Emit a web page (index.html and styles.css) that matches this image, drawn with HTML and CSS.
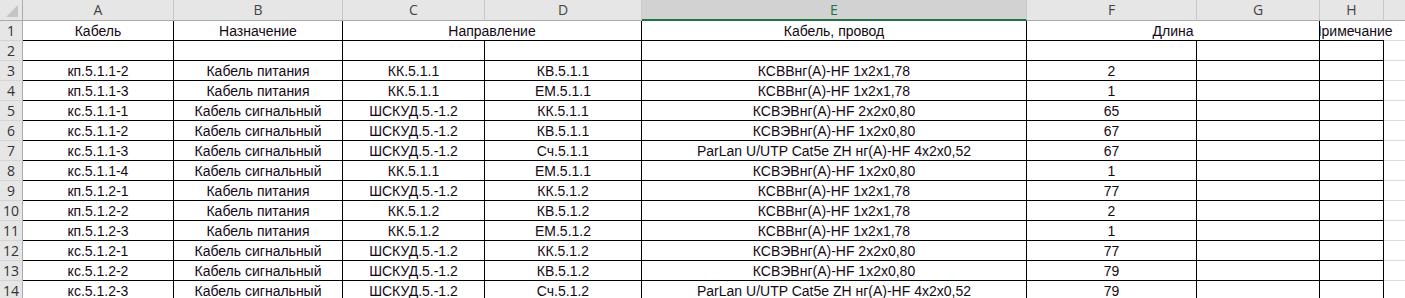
FILE: index.html
```html
<!DOCTYPE html>
<html lang="ru">
<head>
<meta charset="utf-8">
<title>Кабельный журнал</title>
<link rel="stylesheet" href="styles.css">
</head>
<body>
<div class="sheet">
  <div class="grid">
    <div class="corner"><svg width="22" height="20" viewBox="0 0 22 20"><polygon points="18,5 18,17 6,17" fill="#c4c4c4"/></svg></div>
    <div class="ch">A</div>
    <div class="ch">B</div>
    <div class="ch">C</div>
    <div class="ch">D</div>
    <div class="ch sel">E</div>
    <div class="ch">F</div>
    <div class="ch">G</div>
    <div class="ch">H</div>
    <div class="ch"></div>

    <div class="rh">1</div>
    <div class="c">Кабель</div>
    <div class="c">Назначение</div>
    <div class="c span2">Направление</div>
    <div class="c">Кабель, провод</div>
    <div class="c span2">Длина</div>
    <div class="c note">Примечание</div>
    <div class="ci"></div>

    <div class="rh">2</div>
    <div class="c"></div><div class="c"></div><div class="c"></div><div class="c"></div><div class="c"></div><div class="c"></div><div class="c"></div><div class="c"></div>
    <div class="ci"></div>

    <div class="rh">3</div>
    <div class="c">кп.5.1.1-2</div><div class="c">Кабель питания</div><div class="c">КК.5.1.1</div><div class="c">КВ.5.1.1</div><div class="c">КСВВнг(А)-HF 1х2х1,78</div><div class="c">2</div><div class="c"></div><div class="c"></div>
    <div class="ci"></div>

    <div class="rh">4</div>
    <div class="c">кп.5.1.1-3</div><div class="c">Кабель питания</div><div class="c">КК.5.1.1</div><div class="c">ЕМ.5.1.1</div><div class="c">КСВВнг(А)-HF 1х2х1,78</div><div class="c">1</div><div class="c"></div><div class="c"></div>
    <div class="ci"></div>

    <div class="rh">5</div>
    <div class="c">кс.5.1.1-1</div><div class="c">Кабель сигнальный</div><div class="c">ШСКУД.5.-1.2</div><div class="c">КК.5.1.1</div><div class="c">КСВЭВнг(А)-HF 2х2х0,80</div><div class="c">65</div><div class="c"></div><div class="c"></div>
    <div class="ci"></div>

    <div class="rh">6</div>
    <div class="c">кс.5.1.1-2</div><div class="c">Кабель сигнальный</div><div class="c">ШСКУД.5.-1.2</div><div class="c">КВ.5.1.1</div><div class="c">КСВЭВнг(А)-HF 1х2х0,80</div><div class="c">67</div><div class="c"></div><div class="c"></div>
    <div class="ci"></div>

    <div class="rh">7</div>
    <div class="c">кс.5.1.1-3</div><div class="c">Кабель сигнальный</div><div class="c">ШСКУД.5.-1.2</div><div class="c">Сч.5.1.1</div><div class="c">ParLan U/UTP Cat5e ZH нг(А)-HF 4х2х0,52</div><div class="c">67</div><div class="c"></div><div class="c"></div>
    <div class="ci"></div>

    <div class="rh">8</div>
    <div class="c">кс.5.1.1-4</div><div class="c">Кабель сигнальный</div><div class="c">КК.5.1.1</div><div class="c">ЕМ.5.1.1</div><div class="c">КСВЭВнг(А)-HF 1х2х0,80</div><div class="c">1</div><div class="c"></div><div class="c"></div>
    <div class="ci"></div>

    <div class="rh">9</div>
    <div class="c">кп.5.1.2-1</div><div class="c">Кабель питания</div><div class="c">ШСКУД.5.-1.2</div><div class="c">КК.5.1.2</div><div class="c">КСВВнг(А)-HF 1х2х1,78</div><div class="c">77</div><div class="c"></div><div class="c"></div>
    <div class="ci"></div>

    <div class="rh">10</div>
    <div class="c">кп.5.1.2-2</div><div class="c">Кабель питания</div><div class="c">КК.5.1.2</div><div class="c">КВ.5.1.2</div><div class="c">КСВВнг(А)-HF 1х2х1,78</div><div class="c">2</div><div class="c"></div><div class="c"></div>
    <div class="ci"></div>

    <div class="rh">11</div>
    <div class="c">кп.5.1.2-3</div><div class="c">Кабель питания</div><div class="c">КК.5.1.2</div><div class="c">ЕМ.5.1.2</div><div class="c">КСВВнг(А)-HF 1х2х1,78</div><div class="c">1</div><div class="c"></div><div class="c"></div>
    <div class="ci"></div>

    <div class="rh">12</div>
    <div class="c">кс.5.1.2-1</div><div class="c">Кабель сигнальный</div><div class="c">ШСКУД.5.-1.2</div><div class="c">КК.5.1.2</div><div class="c">КСВЭВнг(А)-HF 2х2х0,80</div><div class="c">77</div><div class="c"></div><div class="c"></div>
    <div class="ci"></div>

    <div class="rh">13</div>
    <div class="c">кс.5.1.2-2</div><div class="c">Кабель сигнальный</div><div class="c">ШСКУД.5.-1.2</div><div class="c">КВ.5.1.2</div><div class="c">КСВЭВнг(А)-HF 1х2х0,80</div><div class="c">79</div><div class="c"></div><div class="c"></div>
    <div class="ci"></div>

    <div class="rh">14</div>
    <div class="c">кс.5.1.2-3</div><div class="c">Кабель сигнальный</div><div class="c">ШСКУД.5.-1.2</div><div class="c">Сч.5.1.2</div><div class="c">ParLan U/UTP Cat5e ZH нг(А)-HF 4х2х0,52</div><div class="c">79</div><div class="c"></div><div class="c"></div>
    <div class="ci"></div>
  </div>
</div>
</body>
</html>
```

FILE: styles.css
```css
* {
  box-sizing: border-box;
  margin: 0;
  padding: 0;
}

html, body {
  margin: 0;
  background: #ffffff;
}

.sheet {
  width: 1405px;
  height: 298px;
  overflow: hidden;
}

.grid {
  display: grid;
  grid-template-columns: 23px 151px 169px 142px 157px 385px 170px 123px 64px 64px;
  grid-template-rows: 21px repeat(14, 20px);
  width: 1448px;
}

.corner {
  background: #e6e6e6;
  border-right: 1px solid #ababab;
  border-bottom: 1px solid #ababab;
  display: flex;
}

.ch {
  background: #e6e6e6;
  border-right: 1px solid #c8c8c8;
  border-bottom: 1px solid #ababab;
  display: flex;
  align-items: center;
  justify-content: center;
  font-family: "Open Sans", "Liberation Sans", sans-serif;
  font-size: 14px;
  color: #444444;
  line-height: 16px;
}

.ch.sel {
  background: #d2d2d2;
  color: #217346;
  border-bottom: 2px solid #217346;
}

.rh {
  background: #e6e6e6;
  border-right: 1px solid #ababab;
  border-bottom: 1px solid #d4d4d4;
  display: flex;
  align-items: center;
  justify-content: center;
  font-family: "Open Sans", "Liberation Sans", sans-serif;
  font-size: 14px;
  color: #333333;
  line-height: 16px;
}

.c {
  border-right: 1px solid #000000;
  border-bottom: 1px solid #000000;
  display: flex;
  align-items: flex-end;
  justify-content: center;
  padding-bottom: 2px;
  font-family: "Liberation Sans", sans-serif;
  font-size: 14px;
  line-height: 13px;
  color: #140814;
  white-space: nowrap;
}

.span2 {
  grid-column: span 2;
}

.note {
  border-right: none;
  overflow: visible;
  clip-path: inset(0 -40px 0 0);
}

.ci {
  border-right: 1px solid #dadcdd;
  border-bottom: 1px solid #dadcdd;
}
```
